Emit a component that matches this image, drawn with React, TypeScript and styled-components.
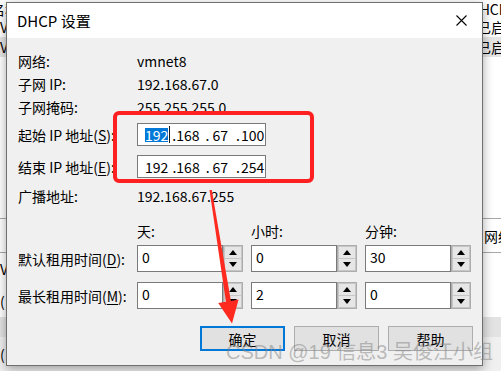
import styled, { createGlobalStyle } from "styled-components";

const GlobalStyle = createGlobalStyle`
  html, body { margin: 0; padding: 0; }
  body {
    width: 501px;
    height: 371px;
    overflow: hidden;
    background: #fff;
    font-family: "Noto Sans CJK SC", "Noto Sans", sans-serif;
    color: #000;
  }
`;

// ---- backdrop (the window behind the dialog) ----

const Screen = styled.div`
  position: relative;
  width: 501px;
  height: 371px;
  overflow: hidden;
`;

const Backdrop = styled.div`
  display: flex;
  flex-direction: column;
  height: 100%;
  background: #fff;
  font-size: 14px;
`;

const BgRow = styled.div<{ $h: number; $bg?: string; $line?: boolean }>`
  display: grid;
  grid-template-columns: 474px 1fr;
  align-items: center;
  height: ${(p) => p.$h}px;
  flex-shrink: 0;
  background: ${(p) => p.$bg || "transparent"};
  border-top: ${(p) => (p.$line ? "1px solid #a8a8a8" : "none")};
  white-space: nowrap;
`;

const BgCell = styled.span<{ $ml?: number }>`
  margin-left: ${(p) => p.$ml || 0}px;
  line-height: 1;
`;

const BgFill = styled.div<{ $bg?: string }>`
  flex: 1;
  background: ${(p) => p.$bg || "#fff"};
`;

// ---- dialog ----

const Dialog = styled.div`
  position: absolute;
  left: 6px;
  top: 2px;
  width: 477px;
  height: 364px;
  box-sizing: border-box;
  border: 1px solid #6f6f6f;
  background: #f0f0f0;
  box-shadow: 0 3px 10px rgba(0, 0, 0, 0.35);
  display: flex;
  flex-direction: column;
`;

const TitleBar = styled.div`
  height: 35px;
  flex-shrink: 0;
  background: #fff;
  display: flex;
  align-items: center;
  justify-content: space-between;
  padding: 0 15px 0 10px;
`;

const Title = styled.span`
  font-size: 15px;
  line-height: 1;
`;

const Body = styled.div`
  flex: 1;
  display: flex;
  flex-direction: column;
  padding: 11px 9px 0 11px;
  font-size: 14px;
`;

const InfoRow = styled.div<{ $mt?: number }>`
  display: grid;
  grid-template-columns: 119px 1fr;
  align-items: center;
  height: 23px;
  margin-top: ${(p) => p.$mt || 0}px;
  white-space: nowrap;
`;

const Label = styled.span<{ $mt?: number }>`
  line-height: 1;
  margin-top: ${(p) => p.$mt || 0}px;
`;

const Key = styled.u`
  text-underline-offset: 2px;
`;

const IpBox = styled.div`
  width: 129px;
  height: 23px;
  box-sizing: border-box;
  border: 1px solid #7a7a7a;
  background: #fff;
  display: flex;
  align-items: center;
  padding-left: 7px;
  white-space: pre;
`;

const IpPart = styled.span<{ $ml?: number; $sel?: boolean }>`
  margin-left: ${(p) => p.$ml || 0}px;
  line-height: 14px;
  background: ${(p) => (p.$sel ? "#0078d7" : "transparent")};
  color: ${(p) => (p.$sel ? "#fff" : "#000")};
`;

const Caret = styled.span`
  width: 1px;
  height: 17px;
  margin-left: 1px;
  background: #1a1a1a;
`;

const TimeGrid = styled.div`
  display: grid;
  grid-template-columns: 111px 106px 106px 106px;
  column-gap: 8px;
  align-items: center;
  margin-top: 14px;
  white-space: nowrap;
`;

const TimeHead = styled.span`
  height: 20px;
  line-height: 20px;
`;

const SpinField = styled.div<{ $mt: number }>`
  display: flex;
  height: 27px;
  margin-top: ${(p) => p.$mt}px;
`;

const SpinInput = styled.div`
  flex: 1;
  box-sizing: border-box;
  border: 1px solid #7a7a7a;
  background: #fff;
  padding: 3px 0 0 4px;
  line-height: 16px;
`;

const Spinner = styled.div`
  width: 20px;
  box-sizing: border-box;
  border: 1px solid #adadad;
  background: #c6c6c6;
  display: flex;
  flex-direction: column;
  gap: 1px;
  padding: 1px;
`;

const SpinBtn = styled.div`
  flex: 1;
  background: #e6e6e6;
  display: flex;
  align-items: center;
  justify-content: center;
`;

const ButtonRow = styled.div`
  display: flex;
  justify-content: flex-end;
  gap: 9px;
  margin-top: 17px;
`;

const Button = styled.div<{ $focus?: boolean }>`
  width: 85px;
  height: 25px;
  box-sizing: border-box;
  background: #e1e1e1;
  border: ${(p) => (p.$focus ? "2px solid #0078d7" : "1px solid #adadad")};
  display: flex;
  align-items: center;
  justify-content: center;
  line-height: 1;
`;

// ---- annotations on top ----

const Highlight = styled.div`
  position: absolute;
  left: 113px;
  top: 111px;
  width: 201px;
  height: 72px;
  box-sizing: border-box;
  border: 4px solid #ff2121;
  border-radius: 6px;
`;

const Overlay = styled.svg`
  position: absolute;
  left: 0;
  top: 0;
  pointer-events: none;
`;

const Watermark = styled.div`
  position: absolute;
  left: 226px;
  top: 340px;
  font-size: 20px;
  line-height: 24px;
  color: rgba(130, 130, 130, 0.5);
  font-family: "Liberation Sans", "Noto Sans CJK SC", sans-serif;
  white-space: nowrap;
`;

function Tri({ up }: { up?: boolean }) {
  return (
    <svg width="8" height="5" viewBox="0 0 8 5">
      <polygon points={up ? "0,5 8,5 4,0" : "0,0 8,0 4,5"} fill="#000" />
    </svg>
  );
}

function Spin({ value, mt }: { value: string; mt: number }) {
  return (
    <SpinField $mt={mt}>
      <SpinInput>{value}</SpinInput>
      <Spinner>
        <SpinBtn><Tri up /></SpinBtn>
        <SpinBtn><Tri /></SpinBtn>
      </Spinner>
    </SpinField>
  );
}

function IpAddress({ last, selected }: { last: string; selected?: boolean }) {
  return (
    <IpBox>
      <IpPart $sel={selected}>192</IpPart>
      {selected ? <Caret /> : <IpPart $ml={1}> </IpPart>}
      <IpPart $ml={selected ? 2 : 0}>.168</IpPart>
      <IpPart $ml={6}>.</IpPart>
      <IpPart $ml={3}>67</IpPart>
      <IpPart $ml={8}>.</IpPart>
      <IpPart $ml={1}>{last}</IpPart>
    </IpBox>
  );
}

export default function App() {
  return (
    <Screen>
      <GlobalStyle />
      <Backdrop>
        <BgRow $h={17}>
          <BgCell $ml={-9}>名称</BgCell>
          <BgCell $ml={-4}>DHCP</BgCell>
        </BgRow>
        <BgRow $h={20}>
          <BgCell>VMnet1</BgCell>
          <BgCell $ml={3}>已启用</BgCell>
        </BgRow>
        <BgRow $h={20} $bg="#e5e5e5">
          <BgCell>VMnet8</BgCell>
          <BgCell $ml={3}>已启用</BgCell>
        </BgRow>
        <BgFill />
        <BgRow $h={33} $line>
          <BgCell />
          <BgCell $ml={10}>网络</BgCell>
        </BgRow>
        <BgRow $h={32} $line>
          <BgCell>VMnet</BgCell>
          <BgCell />
        </BgRow>
        <BgRow $h={32}>
          <BgCell>(</BgCell>
          <BgCell />
        </BgRow>
        <BgRow $h={20} $bg="#e3e3e3">
          <BgCell />
          <BgCell />
        </BgRow>
        <BgRow $h={34} $bg="#f0f0f0">
          <BgCell>(</BgCell>
          <BgCell />
        </BgRow>
      </Backdrop>

      <Dialog>
        <TitleBar>
          <Title>DHCP 设置</Title>
          <svg width="11" height="11" viewBox="0 0 11 11">
            <path d="M0.5 0.5 L10.5 10.5 M10.5 0.5 L0.5 10.5" stroke="#000" strokeWidth="1.1" />
          </svg>
        </TitleBar>
        <Body>
          <InfoRow>
            <Label>网络:</Label>
            <span>vmnet8</span>
          </InfoRow>
          <InfoRow>
            <Label>子网 IP:</Label>
            <span>192.168.67.0</span>
          </InfoRow>
          <InfoRow>
            <Label>子网掩码:</Label>
            <span>255.255.255.0</span>
          </InfoRow>
          <InfoRow $mt={5}>
            <Label>起始 IP 地址(<Key>S</Key>):</Label>
            <IpAddress last="100" selected />
          </InfoRow>
          <InfoRow $mt={9}>
            <Label>结束 IP 地址(<Key>E</Key>):</Label>
            <IpAddress last="254" />
          </InfoRow>
          <InfoRow $mt={6}>
            <Label>广播地址:</Label>
            <span>192.168.67.255</span>
          </InfoRow>

          <TimeGrid>
            <span />
            <TimeHead>天:</TimeHead>
            <TimeHead>小时:</TimeHead>
            <TimeHead>分钟:</TimeHead>

            <Label $mt={4}>默认租用时间(<Key>D</Key>):</Label>
            <Spin value="0" mt={4} />
            <Spin value="0" mt={4} />
            <Spin value="30" mt={4} />

            <Label $mt={10}>最长租用时间(<Key>M</Key>):</Label>
            <Spin value="0" mt={10} />
            <Spin value="2" mt={10} />
            <Spin value="0" mt={10} />
          </TimeGrid>

          <ButtonRow>
            <Button $focus>确定</Button>
            <Button>取消</Button>
            <Button>帮助</Button>
          </ButtonRow>
        </Body>
      </Dialog>

      <Highlight />
      <Overlay width="501" height="371" viewBox="0 0 501 371">
        <polygon
          points="209.5,190 211.8,190 230.9,300.9 238.6,299.6 232,323.5 218.2,303 225.9,301.7"
          fill="#ff2a1f"
        />
      </Overlay>
      <Watermark>CSDN @19 信息3 吴俊江小组</Watermark>
    </Screen>
  );
}
